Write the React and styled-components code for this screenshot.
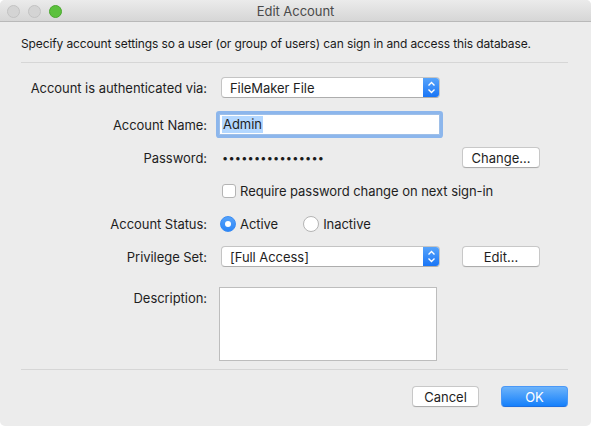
import React from 'react';
import styled, { createGlobalStyle } from 'styled-components';

const GlobalStyle = createGlobalStyle`
  html, body {
    margin: 0;
    padding: 0;
    background: #ffffff;
  }
  body {
    font-family: 'Inter', 'Liberation Sans', sans-serif;
    font-size: 13px;
    color: #1e1e1e;
    -webkit-font-smoothing: antialiased;
  }
`;

const FONT = `'Inter', 'Liberation Sans', sans-serif`;

const Window = styled.div`
  width: 591px;
  height: 426px;
  background: #ececec;
  border-radius: 5px;
  overflow: hidden;
  display: flex;
  flex-direction: column;
  font-family: ${FONT};
  letter-spacing: -0.05px;
`;

const TitleBar = styled.div`
  height: 21px;
  flex: none;
  position: relative;
  display: flex;
  align-items: center;
  justify-content: center;
  background: linear-gradient(#ebebeb, #d6d6d6);
  border-bottom: 1px solid #b9b9b9;
`;

const Lights = styled.div`
  position: absolute;
  left: 7px;
  top: 5px;
  display: flex;
  gap: 8px;
`;

const Light = styled.span`
  width: 11px;
  height: 11px;
  border-radius: 50%;
  background: ${(p) => (p.$green ? '#5cc13d' : '#d4d4d4')};
  border: 0.5px solid ${(p) => (p.$green ? '#4aa72e' : '#c2c2c2')};
`;

const Title = styled.div`
  font-size: 13px;
  color: #4a4a4a;
`;

const Body = styled.div`
  flex: 1;
  display: flex;
  flex-direction: column;
  padding: 14px 23px 0 21px;
`;

const Intro = styled.div`
  font-size: 12px;
  line-height: 16px;
  color: #1a1a1a;
  letter-spacing: -0.12px;
`;

const Divider = styled.div`
  height: 1px;
  background: #d6d6d6;
  margin-top: ${(p) => p.$top}px;
`;

const Form = styled.div`
  display: flex;
  flex-direction: column;
  margin-top: 8px;
`;

const Row = styled.div`
  display: grid;
  grid-template-columns: 186px 236px 97px;
  align-items: ${(p) => (p.$top ? 'start' : 'center')};
  height: ${(p) => p.$h || 33}px;
  margin-top: ${(p) => p.$mt || 0}px;
  margin-bottom: ${(p) => p.$mb || 0}px;
`;

const Label = styled.div`
  text-align: right;
  white-space: nowrap;
  line-height: 16px;
  padding-top: ${(p) => p.$pt || 0}px;
`;

const Cell = styled.div`
  padding-left: 12px;
  display: flex;
  align-items: center;
  white-space: nowrap;
  gap: ${(p) => p.$gap || 0}px;
`;

const ButtonCell = styled.div`
  padding-left: 19px;
  display: flex;
`;

const Select = styled.div`
  width: 219px;
  height: 21px;
  margin-left: 2px;
  box-sizing: border-box;
  background: #ffffff;
  border: 1px solid #c4c4c4;
  border-bottom-color: #adadad;
  border-radius: 4px;
  display: flex;
  align-items: center;
  overflow: hidden;
`;

const SelectText = styled.span`
  flex: 1;
  padding-left: 8px;
  font-size: 13px;
`;

const Stepper = styled.span`
  width: 17px;
  height: 21px;
  margin: -1px -1px -1px 0;
  background: linear-gradient(#5aa6fb, #1673f6);
  border-radius: 0 4px 4px 0;
  display: flex;
  align-items: center;
  justify-content: center;
`;

const TextInput = styled.div`
  width: 221px;
  height: 21px;
  box-sizing: border-box;
  background: #ffffff;
  border: 1px solid #9ebfe8;
  box-shadow: 0 0 0 3px #8cb6ec;
  border-radius: 1px;
  display: flex;
  align-items: center;
  padding-left: 2px;
`;

const Selected = styled.span`
  background: #b3d7ff;
  padding: 0 1px;
  line-height: 17px;
  font-size: 13px;
`;

const Dots = styled.span`
  margin-left: 3px;
  font-size: 11px;
  letter-spacing: 0.2px;
  color: #1a1a1a;
`;

const PushButton = styled.button`
  width: ${(p) => p.$w || 78}px;
  height: 21px;
  box-sizing: border-box;
  padding: 0;
  font-family: ${FONT};
  font-size: 13px;
  color: #1e1e1e;
  background: #ffffff;
  border: 1px solid #c8c8c8;
  border-bottom-color: #acacac;
  border-radius: 4px;
  box-shadow: 0 0.5px 0 rgba(0, 0, 0, 0.05);
`;

const DefaultButton = styled(PushButton)`
  color: #ffffff;
  background: linear-gradient(#6cb3fa, #1580fb);
  border: 1px solid #4a98f7;
  border-bottom-color: #1d6fe0;
`;

const Checkbox = styled.span`
  flex: none;
  width: 14px;
  height: 14px;
  margin-left: 3px;
  box-sizing: border-box;
  background: #ffffff;
  border: 1px solid #b4b4b4;
  border-radius: 3px;
`;

const Radio = styled.span`
  flex: none;
  width: 16px;
  height: 16px;
  box-sizing: border-box;
  border-radius: 50%;
  display: flex;
  align-items: center;
  justify-content: center;
  background: ${(p) => (p.$on ? 'linear-gradient(#55a2fa, #2b86f8)' : '#ffffff')};
  border: 1px solid ${(p) => (p.$on ? '#3a8cf3' : '#b4b4b4')};
  &::after {
    content: '';
    display: ${(p) => (p.$on ? 'block' : 'none')};
    width: 6px;
    height: 6px;
    border-radius: 50%;
    background: #ffffff;
  }
`;

const Option = styled.span`
  display: flex;
  align-items: center;
  gap: 4px;
  margin-left: ${(p) => p.$ml || 0}px;
  margin-right: ${(p) => p.$mr || 0}px;
`;

const TextArea = styled.div`
  width: 218px;
  height: 74px;
  box-sizing: border-box;
  background: #ffffff;
  border: 1px solid #bdbdbd;
`;

const Footer = styled.div`
  display: flex;
  justify-content: flex-end;
  gap: 22px;
  margin-top: 16px;
`;

const Chevrons = () => (
  <svg width="9" height="13" viewBox="0 0 9 13">
    <path d="M1.5 4.5 L4.5 1.5 L7.5 4.5" fill="none" stroke="#fff" strokeWidth="1.4" />
    <path d="M1.5 8.5 L4.5 11.5 L7.5 8.5" fill="none" stroke="#fff" strokeWidth="1.4" />
  </svg>
);

export default function App() {
  return (
    <>
      <GlobalStyle />
      <Window>
        <TitleBar>
          <Lights>
            <Light />
            <Light />
            <Light $green />
          </Lights>
          <Title>Edit Account</Title>
        </TitleBar>
        <Body>
          <Intro>
            Specify account settings so a user (or group of users) can sign in and access this database.
          </Intro>
          <Divider $top={10} />
          <Form>
            <Row $mb={4}>
              <Label>Account is authenticated via:</Label>
              <Cell>
                <Select>
                  <SelectText>FileMaker File</SelectText>
                  <Stepper>
                    <Chevrons />
                  </Stepper>
                </Select>
              </Cell>
            </Row>
            <Row>
              <Label>Account Name:</Label>
              <Cell>
                <TextInput>
                  <Selected>Admin</Selected>
                </TextInput>
              </Cell>
            </Row>
            <Row>
              <Label>Password:</Label>
              <Cell>
                <Dots>••••••••••••••••</Dots>
              </Cell>
              <ButtonCell>
                <PushButton>Change...</PushButton>
              </ButtonCell>
            </Row>
            <Row>
              <span />
              <Cell $gap={4}>
                <Checkbox />
                <span>Require password change on next sign-in</span>
              </Cell>
            </Row>
            <Row>
              <Label>Account Status:</Label>
              <Cell>
                <Option $ml={1} $mr={25}>
                  <Radio $on />
                  Active
                </Option>
                <Option>
                  <Radio />
                  Inactive
                </Option>
              </Cell>
            </Row>
            <Row>
              <Label>Privilege Set:</Label>
              <Cell>
                <Select>
                  <SelectText>[Full Access]</SelectText>
                  <Stepper>
                    <Chevrons />
                  </Stepper>
                </Select>
              </Cell>
              <ButtonCell>
                <PushButton>Edit...</PushButton>
              </ButtonCell>
            </Row>
            <Row $top $h={74} $mt={14}>
              <Label $pt={3}>Description:</Label>
              <Cell>
                <TextArea />
              </Cell>
            </Row>
          </Form>
          <Divider $top={8} />
          <Footer>
            <PushButton $w={67}>Cancel</PushButton>
            <DefaultButton $w={67}>OK</DefaultButton>
          </Footer>
        </Body>
      </Window>
    </>
  );
}
